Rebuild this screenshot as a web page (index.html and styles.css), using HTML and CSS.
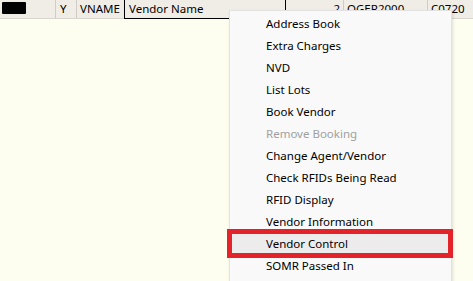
FILE: index.html
```html
<!DOCTYPE html>
<html>
<head>
<meta charset="utf-8">
<link rel="stylesheet" href="styles.css">
</head>
<body>
<div class="grid">
  <div class="header">
    <div class="cell c-swatch"><span class="swatch"></span></div>
    <div class="cell c-y">Y</div>
    <div class="cell c-vname">VNAME</div>
    <div class="cell c-name">Vendor Name</div>
    <div class="cell c-num">2</div>
    <div class="cell c-code">OGER2000</div>
    <div class="cell c-last">C0720</div>
  </div>
</div>
<div class="menu">
  <div class="item">Address Book</div>
  <div class="item">Extra Charges</div>
  <div class="item">NVD</div>
  <div class="item">List Lots</div>
  <div class="item">Book Vendor</div>
  <div class="item disabled">Remove Booking</div>
  <div class="item">Change Agent/Vendor</div>
  <div class="item">Check RFIDs Being Read</div>
  <div class="item">RFID Display</div>
  <div class="item">Vendor Information</div>
  <div class="item active">Vendor Control</div>
  <div class="item">SOMR Passed In</div>
</div>
<div class="highlight-box"></div>
</body>
</html>
```
FILE: styles.css
```css
html, body {
  margin: 0;
  padding: 0;
  overflow: hidden;
}
body {
  width: 473px;
  height: 281px;
  background: #fdfdf0;
  font-family: "Noto Sans", sans-serif;
  font-size: 11.5px;
  color: #000;
  position: relative;
}
.header {
  display: flex;
  height: 18px;
  background: #f0ede6;
  border-bottom: 1px solid #d9d6ce;
}
.cell {
  box-sizing: border-box;
  height: 18px;
  line-height: 17px;
  border-right: 1px solid #cfccc4;
  white-space: nowrap;
  overflow: hidden;
}
.c-swatch {
  width: 56px;
  padding: 2px 0 0 2px;
}
.swatch {
  display: block;
  width: 24px;
  height: 12px;
  background: #000;
  border-radius: 1px;
}
.c-y {
  width: 21px;
  padding-left: 4px;
}
.c-vname {
  width: 47px;
  padding-left: 3px;
  border-right: none;
}
.c-name {
  width: 162px;
  padding-left: 4px;
  border: 1px solid #000;
  border-top: none;
  height: 19px;
}
.c-num {
  width: 58px;
  text-align: right;
  padding-right: 3px;
}
.c-code {
  width: 84px;
  padding-left: 3px;
}
.c-last {
  flex: 1;
  padding-left: 3px;
  border-right: none;
}
.menu {
  position: absolute;
  left: 229px;
  top: 10px;
  width: 223px;
  height: 271px;
  padding-top: 2px;
  background: #f9f9f9;
  border: 1px solid #e2e2e2;
  border-bottom: none;
  box-shadow: 1px 2px 3px rgba(0,0,0,0.12);
  box-sizing: border-box;
  overflow: hidden;
}
.item {
  height: 22px;
  line-height: 22px;
  padding-left: 34px;
  margin: 0 2px;
  border-radius: 3px;
}
.item.disabled {
  color: #a0a0a0;
}
.item.active {
  background: #ececec;
}
.highlight-box {
  position: absolute;
  left: 227px;
  top: 229px;
  width: 226px;
  height: 29px;
  box-sizing: border-box;
  border: 5px solid #e3222a;
}
```
